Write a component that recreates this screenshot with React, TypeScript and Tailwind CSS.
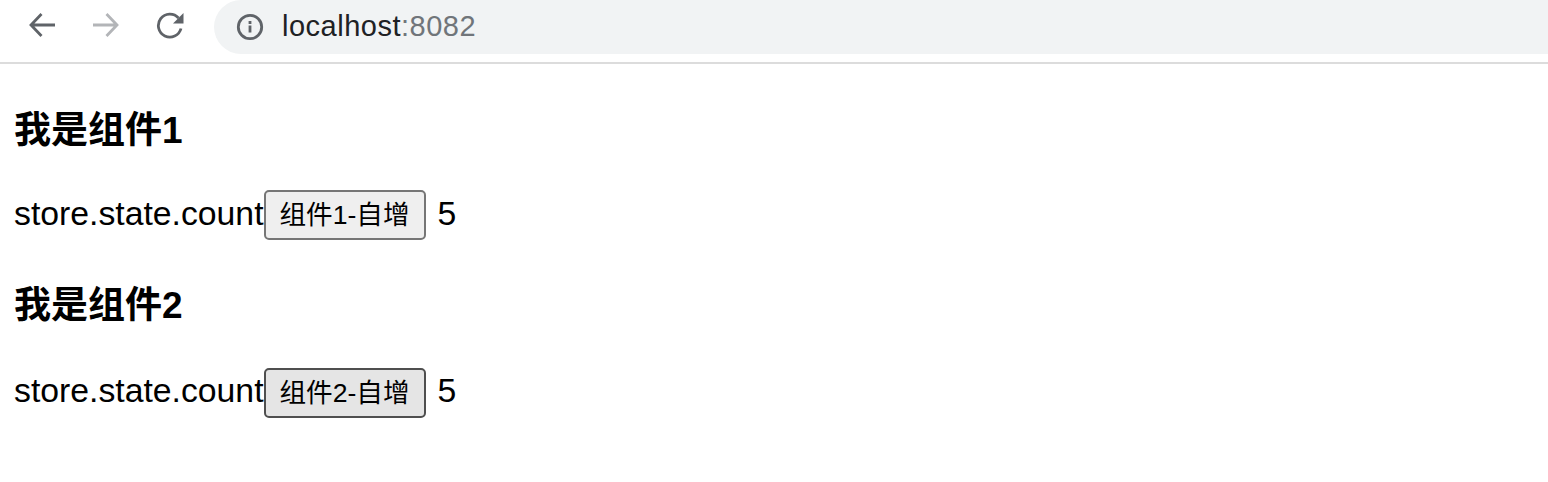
const sans = "font-['Liberation_Sans','Noto_Sans_CJK_SC',sans-serif]";

function Counter({ title, label, pressed }: { title: string; label: string; pressed?: boolean }) {
  return (
    <section>
      <h2 className={pressed ? "text-[37px] leading-[44px] font-bold mb-[40px]" : "text-[37px] leading-[44px] font-bold mb-[37px]"}>
        {title}
      </h2>
      <div className="flex items-center h-[50px] text-[33.75px]">
        <span className={pressed ? "pb-[5px]" : "pb-[3px]"}>store.state.count</span>
        <button
          className={
            pressed
              ? "w-[162px] h-[50px] pt-[2px] rounded-[5px] border-2 border-[#4f4f4f] bg-[#e5e5e5] text-[26.6px] text-black"
              : "w-[162px] h-[50px] pt-[2px] rounded-[5px] border-2 border-[#767676] bg-[#efefef] text-[26.6px] text-black"
          }
        >
          {label}
        </button>
        <span className={pressed ? "ml-3 pb-[5px]" : "ml-3 pb-[3px]"}>5</span>
      </div>
    </section>
  );
}

export default function App() {
  return (
    <div className={`${sans} w-[1548px] h-[482px] overflow-hidden bg-white text-black`}>
      {/* toolbar */}
      <div className="flex items-start h-[64px] border-b-2 border-[#dcdcdc] pl-[28px]">
        <div className="flex items-center h-[50px] gap-[36px]">
          <svg width="28" height="28" viewBox="0 0 28 28" fill="none" stroke="#5f6368" strokeWidth="2.8">
            <path d="M27 14H3M13.5 3 3 14l10.5 11" />
          </svg>
          <svg width="28" height="28" viewBox="0 0 28 28" fill="none" stroke="#b3b5b8" strokeWidth="2.8">
            <path d="M1 14h24M14.5 3 25 14 14.5 25" />
          </svg>
          <svg width="28" height="28" viewBox="0 0 28 28" fill="none">
            <path d="M22.5 7A11.5 11.5 0 1 0 25 17.5" stroke="#5f6368" strokeWidth="2.8" />
            <path d="M27.5 2v10.5H17z" fill="#5f6368" />
          </svg>
        </div>
        <div className="flex-1 flex items-center h-[54px] ml-[30px] pl-[22px] rounded-l-[27px] bg-[#f1f3f4]">
          <svg width="28" height="28" viewBox="0 0 28 28" fill="none">
            <circle cx="14" cy="14" r="11.7" stroke="#5f6368" strokeWidth="2.8" />
            <path d="M14 12.5v7M14 8v3" stroke="#5f6368" strokeWidth="2.8" />
          </svg>
          <span className="ml-[18px] text-[29px] tracking-[0.5px]">
            <span className="text-[#202124]">localhost</span>
            <span className="text-[#70757a]">:8082</span>
          </span>
        </div>
      </div>

      <div className="pl-[14px] pt-[45px] flex flex-col gap-[44px]">
        <Counter title="我是组件1" label="组件1-自增" />
        <Counter title="我是组件2" label="组件2-自增" pressed />
      </div>
    </div>
  );
}
